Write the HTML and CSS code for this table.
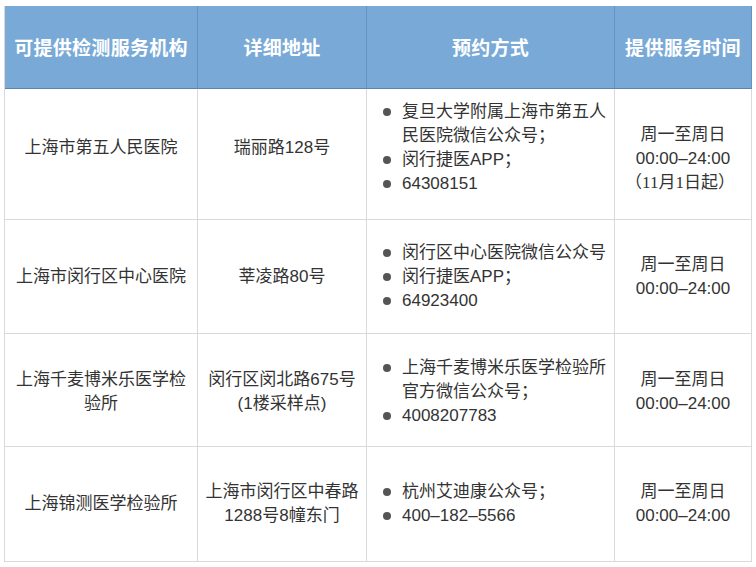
FILE: index.html
```html
<!DOCTYPE html>
<html lang="zh-CN">
<head>
<meta charset="utf-8">
<link rel="stylesheet" href="styles.css">
</head>
<body>
<div class="page">
  <div class="grid">
    <div class="cell th">可提供检测服务机构</div>
    <div class="cell th">详细地址</div>
    <div class="cell th">预约方式</div>
    <div class="cell th">提供服务时间</div>

    <div class="cell lift"><div class="txt">上海市第五人民医院</div></div>
    <div class="cell lift"><div class="txt">瑞丽路128号</div></div>
    <div class="cell ways lift"><ul>
      <li>复旦大学附属上海市第五人<br>民医院微信公众号；</li>
      <li>闵行捷医APP；</li>
      <li>64308151</li>
    </ul></div>
    <div class="cell down"><div class="txt">周一至周日<br>00:00–24:00<br><span class="serif">（11月1日起）</span></div></div>

    <div class="cell"><div class="txt">上海市闵行区中心医院</div></div>
    <div class="cell"><div class="txt">莘凌路80号</div></div>
    <div class="cell ways"><ul>
      <li>闵行区中心医院微信公众号</li>
      <li>闵行捷医APP；</li>
      <li>64923400</li>
    </ul></div>
    <div class="cell"><div class="txt">周一至周日<br>00:00–24:00</div></div>

    <div class="cell drop"><div class="txt">上海千麦博米乐医学检<br>验所</div></div>
    <div class="cell drop"><div class="txt">闵行区闵北路675号<br>(1楼采样点)</div></div>
    <div class="cell ways drop"><ul>
      <li>上海千麦博米乐医学检验所<br>官方微信公众号；</li>
      <li>4008207783</li>
    </ul></div>
    <div class="cell drop"><div class="txt">周一至周日<br>00:00–24:00</div></div>

    <div class="cell"><div class="txt">上海锦测医学检验所</div></div>
    <div class="cell"><div class="txt">上海市闵行区中春路<br>1288号8幢东门</div></div>
    <div class="cell ways"><ul>
      <li>杭州艾迪康公众号；</li>
      <li>400–182–5566</li>
    </ul></div>
    <div class="cell"><div class="txt">周一至周日<br>00:00–24:00</div></div>
  </div>
</div>
</body>
</html>
```
FILE: styles.css
```css
html, body {
  margin: 0;
  padding: 0;
  background: #ffffff;
}
.page {
  padding: 6px 0 0 4px;
  font-family: "Liberation Sans", "Noto Sans CJK SC", sans-serif;
  color: #333333;
}
.grid {
  display: grid;
  grid-template-columns: 193px 169px 248px 137px;
  grid-template-rows: 83px 131px 114px 113px 115px;
  width: 748px;
  border-left: 1px solid #d9d9d9;
}
.cell {
  display: flex;
  align-items: center;
  justify-content: center;
  text-align: center;
  border-right: 1px solid #d9d9d9;
  border-bottom: 1px solid #d9d9d9;
  font-size: 17px;
  line-height: 24px;
  white-space: nowrap;
}
.txt {
  text-align: center;
}
.th {
  background: #79aad7;
  color: #ffffff;
  font-family: "Noto Sans CJK SC", sans-serif;
  font-size: 19px;
  font-weight: bold;
  letter-spacing: 0.3px;
  border-right-color: #6a93ba;
  border-bottom-color: #5d84a8;
}
.lift {
  padding-bottom: 12px;
}
.down {
  padding-top: 10px;
}
.drop {
  padding-top: 4px;
}
.ways {
  justify-content: flex-start;
  text-align: left;
  padding-left: 16px;
}
.ways ul {
  list-style: none;
  margin: 0;
  padding: 0;
}
.ways li {
  position: relative;
  padding-left: 19px;
}
.ways li::before {
  content: "";
  position: absolute;
  left: 0;
  top: 8px;
  width: 8px;
  height: 8px;
  border-radius: 50%;
  background: #555555;
}
.serif {
  font-family: "Liberation Serif", "Noto Sans CJK SC", serif;
  display: inline-block;
  margin-left: -6px;
}
```
